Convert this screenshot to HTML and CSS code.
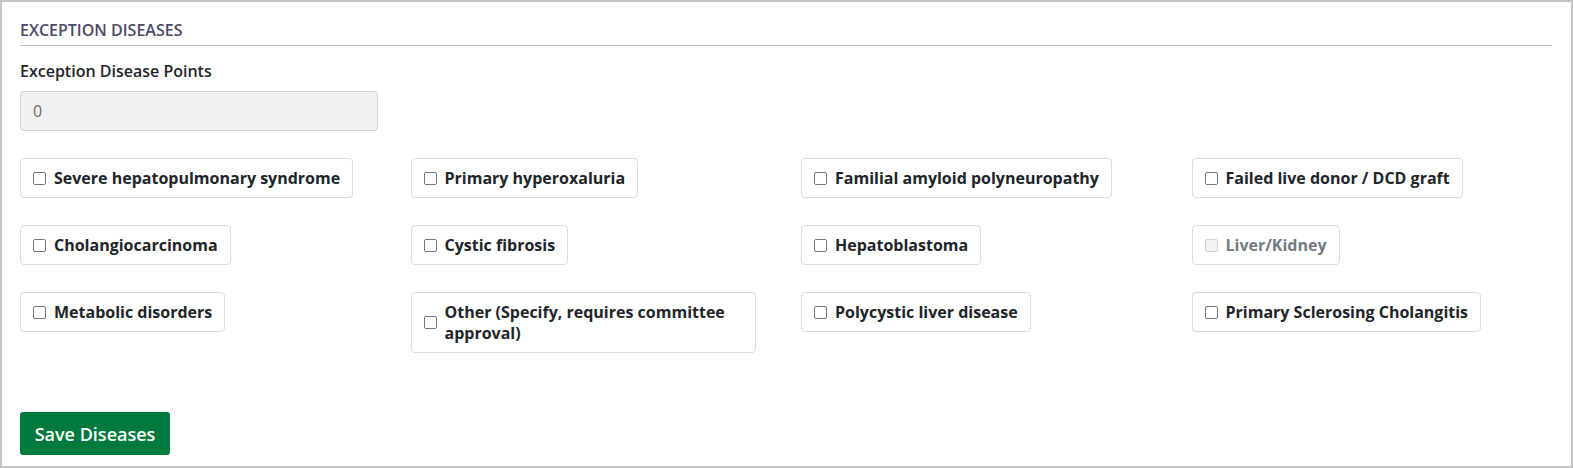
FILE: index.html
```html
<!DOCTYPE html>
<html>
<head>
<meta charset="utf-8">
<link rel="stylesheet" href="styles.css">
</head>
<body>
<div class="panel">
  <h2 class="section-title">EXCEPTION DISEASES</h2>
  <label class="field-label">Exception Disease Points</label>
  <div class="points-input">0</div>
  <div class="disease-grid">
    <div class="cell"><label class="option"><span class="box"></span><span class="text">Severe hepatopulmonary syndrome</span></label></div>
    <div class="cell"><label class="option"><span class="box"></span><span class="text">Primary hyperoxaluria</span></label></div>
    <div class="cell"><label class="option"><span class="box"></span><span class="text">Familial amyloid polyneuropathy</span></label></div>
    <div class="cell"><label class="option"><span class="box"></span><span class="text">Failed live donor / DCD graft</span></label></div>
    <div class="cell"><label class="option"><span class="box"></span><span class="text">Cholangiocarcinoma</span></label></div>
    <div class="cell"><label class="option"><span class="box"></span><span class="text">Cystic fibrosis</span></label></div>
    <div class="cell"><label class="option"><span class="box"></span><span class="text">Hepatoblastoma</span></label></div>
    <div class="cell"><label class="option disabled"><span class="box"></span><span class="text">Liver/Kidney</span></label></div>
    <div class="cell"><label class="option"><span class="box"></span><span class="text">Metabolic disorders</span></label></div>
    <div class="cell"><label class="option wide"><span class="box"></span><span class="text">Other (Specify, requires committee approval)</span></label></div>
    <div class="cell"><label class="option"><span class="box"></span><span class="text">Polycystic liver disease</span></label></div>
    <div class="cell"><label class="option"><span class="box"></span><span class="text">Primary Sclerosing Cholangitis</span></label></div>
  </div>
  <button class="save-btn">Save Diseases</button>
</div>
</body>
</html>
```
FILE: styles.css
```css
html, body {
  margin: 0;
  padding: 0;
  background: #fff;
}
body {
  font-family: "Open Sans", "Liberation Sans", sans-serif;
  color: #212529;
}
.panel {
  box-sizing: border-box;
  width: 1573px;
  height: 468px;
  border: 2px solid #c4c4c4;
  padding: 17px 19px 0 18px;
}
.section-title {
  margin: 0;
  font-size: 16px;
  font-weight: 600;
  color: #4b4a68;
  line-height: 22px;
  padding-bottom: 4px;
  border-bottom: 1px solid #bdbdbd;
}
.field-label {
  display: block;
  margin-top: 14px;
  font-size: 16px;
  font-weight: 600;
  line-height: 22px;
}
.points-input {
  box-sizing: border-box;
  margin-top: 9px;
  width: 358px;
  height: 40px;
  background: #f1f1f1;
  border: 1px solid #d0d0d0;
  border-radius: 4px;
  padding: 0 12px;
  font-size: 16px;
  line-height: 38px;
  color: #6c6c6c;
}
.disease-grid {
  display: grid;
  grid-template-columns: repeat(4, 1fr);
  column-gap: 30px;
  row-gap: 27px;
  margin-top: 27px;
  align-items: start;
}
.option {
  display: inline-flex;
  align-items: center;
  gap: 8px;
  box-sizing: border-box;
  max-width: 345px;
  padding: 8.5px 12px 8.5px 12px;
  border: 1px solid #dcdcdc;
  border-radius: 4px;
  font-size: 16px;
  font-weight: 700;
  line-height: 21px;
  color: #212529;
}
.box {
  flex: none;
  box-sizing: border-box;
  width: 13px;
  height: 13px;
  border: 1px solid #767676;
  border-radius: 2px;
  background: #fff;
}
.option.disabled {
  color: #737b83;
}
.option.disabled .box {
  border-color: #d3d3d3;
  background: #f2f2f2;
}
.save-btn {
  display: block;
  margin-top: 59px;
  width: 150px;
  height: 43px;
  padding: 0;
  background: #007a3d;
  color: #fff;
  border: none;
  border-radius: 3px;
  font-family: "Open Sans", "Liberation Sans", sans-serif;
  font-size: 18px;
  font-weight: 600;
  white-space: nowrap;
  text-align: center;
}
```
